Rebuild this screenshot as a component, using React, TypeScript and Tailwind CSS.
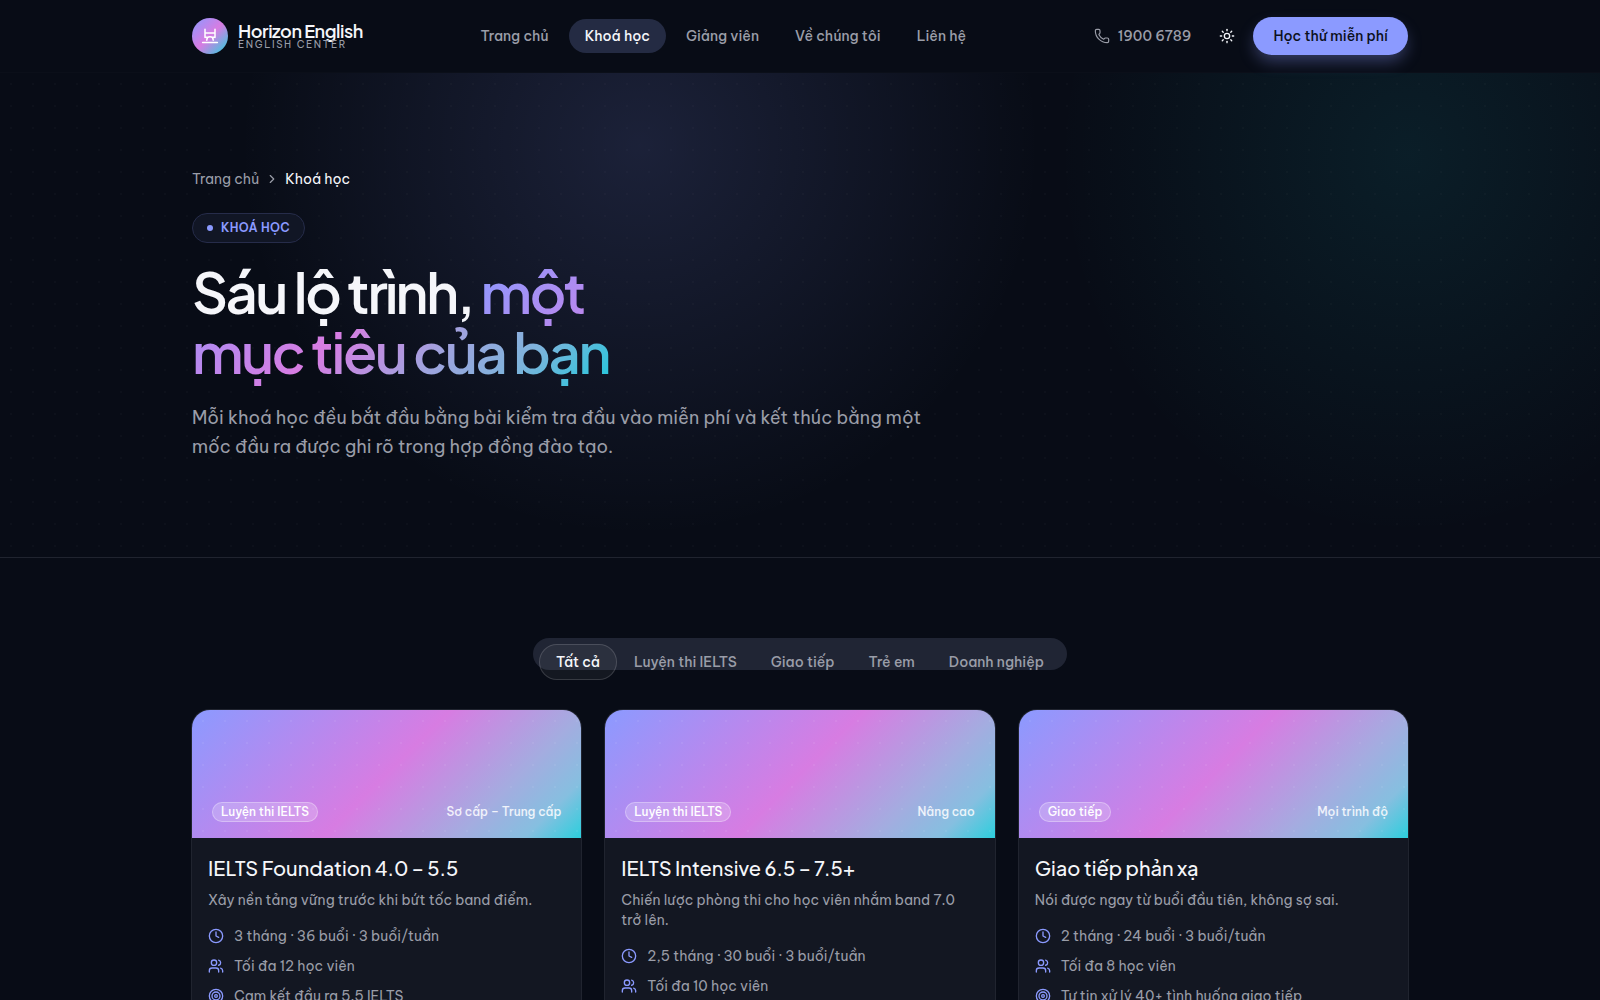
import type { ReactNode } from 'react'
import { ChevronRight, Clock, Phone, Sun, Target, Users } from 'lucide-react'
import { clsx } from 'clsx'

type Course = {
  title: string
  category: string
  level: string
  summary: string
  schedule: string
  size: string
  outcome: string
}

const NAV = [
  { label: 'Trang chủ', href: '#trang-chu' },
  { label: 'Khoá học', href: '#khoa-hoc', active: true },
  { label: 'Giảng viên', href: '#giang-vien' },
  { label: 'Về chúng tôi', href: '#ve-chung-toi' },
  { label: 'Liên hệ', href: '#lien-he' },
]

const FILTERS = ['Tất cả', 'Luyện thi IELTS', 'Giao tiếp', 'Trẻ em', 'Doanh nghiệp']

const COURSES: Course[] = [
  {
    title: 'IELTS Foundation 4.0 – 5.5',
    category: 'Luyện thi IELTS',
    level: 'Sơ cấp – Trung cấp',
    summary: 'Xây nền tảng vững trước khi bứt tốc band điểm.',
    schedule: '3 tháng · 36 buổi · 3 buổi/tuần',
    size: 'Tối đa 12 học viên',
    outcome: 'Cam kết đầu ra 5.5 IELTS',
  },
  {
    title: 'IELTS Intensive 6.5 – 7.5+',
    category: 'Luyện thi IELTS',
    level: 'Nâng cao',
    summary: 'Chiến lược phòng thi cho học viên nhắm band 7.0 trở lên.',
    schedule: '2,5 tháng · 30 buổi · 3 buổi/tuần',
    size: 'Tối đa 10 học viên',
    outcome: 'Cam kết đầu ra 7.0 IELTS',
  },
  {
    title: 'Giao tiếp phản xạ',
    category: 'Giao tiếp',
    level: 'Mọi trình độ',
    summary: 'Nói được ngay từ buổi đầu tiên, không sợ sai.',
    schedule: '2 tháng · 24 buổi · 3 buổi/tuần',
    size: 'Tối đa 8 học viên',
    outcome: 'Tự tin xử lý 40+ tình huống giao tiếp',
  },
]

function Container({ className, children }: { className?: string; children: ReactNode }) {
  return <div className={clsx('mx-auto w-full max-w-7xl px-8', className)}>{children}</div>
}

function Logo() {
  return (
    <a href="#trang-chu" className="flex items-center gap-2.5">
      <span className="flex size-9 items-center justify-center rounded-full bg-[linear-gradient(135deg,#8b9aff_0%,#d77ce2_50%,#22d3dd_100%)]">
        <svg viewBox="0 0 18 18" className="size-[18px]" fill="none" stroke="white" strokeWidth="1.5" strokeLinecap="round" aria-hidden>
          <path d="M4 2.2v8.3M14 2.2v8.3M4 6h10M5.8 13.2v-.3a3.2 3.2 0 0 1 6.4 0v.3M4 10.3h2.4M11.6 10.3H14M1.6 15.4h14.8" />
        </svg>
      </span>
      <span className="flex flex-col">
        <span className="font-['Plus_Jakarta_Sans','Inter',sans-serif] text-lg leading-[18px] font-semibold tracking-tight text-[#f5f6fa]">
          Horizon English
        </span>
        <span className="text-[10px] leading-[10px] tracking-[0.16em] text-[#9a9da8]">ENGLISH CENTER</span>
      </span>
    </a>
  )
}

function Header() {
  return (
    <header className="border-b border-[#0b0f19] bg-[#080c16]">
      <Container className="flex h-[72px] items-center justify-between">
        <Logo />
        <nav className="flex gap-1">
          {NAV.map((item) => (
            <a
              key={item.label}
              href={item.href}
              className={clsx(
                'rounded-full px-4 py-[7px] text-sm font-medium',
                item.active ? 'bg-[#242b43] text-[#f5f6fa]' : 'text-[#9a9da8]'
              )}
            >
              {item.label}
            </a>
          ))}
        </nav>
        <div className="flex items-center gap-2">
          <a href="tel:19006789" className="flex items-center gap-2 px-2.5 text-sm font-medium text-[#9a9da8]">
            <Phone className="size-4" strokeWidth={1.75} />
            1900 6789
          </a>
          <button type="button" aria-label="Đổi giao diện" className="flex size-9 items-center justify-center text-[#f5f6fa]">
            <Sun className="size-4" />
          </button>
          <button
            type="button"
            className="h-[38px] rounded-full bg-[#8b9aff] px-5 text-sm font-medium text-[#0b1020] shadow-[0_8px_16px_-2px_rgba(139,154,255,0.35)]"
          >
            Học thử miễn phí
          </button>
        </div>
      </Container>
    </header>
  )
}

function Hero() {
  return (
    <section className="border-b border-[#20242f] bg-[radial-gradient(circle_at_center,rgba(255,255,255,0.02)_1px,transparent_1px),radial-gradient(400px_390px_at_40%_15%,rgba(139,154,255,0.15),transparent),radial-gradient(350px_380px_at_88%_17%,rgba(34,211,221,0.09),transparent)] bg-[size:22px_22px,auto,auto]">
      <Container className="py-24">
        <nav aria-label="Breadcrumb" className="flex items-center gap-1.5 text-sm leading-5 text-[#9a9da8]">
          <a href="#trang-chu">Trang chủ</a>
          <ChevronRight className="size-3.5" />
          <span aria-current="page" className="text-[#f5f6fa]">Khoá học</span>
        </nav>
        <p className="mt-6 inline-flex h-[30px] items-center gap-2 rounded-full border border-[#262c4a] bg-[#111625] px-3.5 text-xs font-semibold tracking-wide text-[#8b9aff]">
          <span className="size-1.5 rounded-full bg-[#8b9aff]" />
          KHOÁ HỌC
        </p>
        <h1 className="mt-[18px] max-w-md font-['Plus_Jakarta_Sans','Inter',sans-serif] text-[56px] leading-[60px] font-semibold tracking-[-0.04em] text-[#f5f6fa]">
          Sáu lộ trình,{' '}
          <span className="bg-[linear-gradient(135deg,#8b9aff_0%,#d77ce2_45%,#a2a2de_65%,#7cb4dc_82%,#22c8dc_100%)] bg-clip-text text-transparent">
            một mục tiêu của bạn
          </span>
        </h1>
        <p className="mt-[22px] max-w-3xl text-lg leading-[29px] text-[#9a9da8]">
          Mỗi khoá học đều bắt đầu bằng bài kiểm tra đầu vào miễn phí và kết thúc bằng một mốc đầu ra được ghi rõ trong hợp đồng đào tạo.
        </p>
      </Container>
    </section>
  )
}

function Filters() {
  return (
    <div role="tablist" aria-label="Lọc khoá học" className="mx-auto flex h-8 w-fit items-start rounded-full bg-[#202534] px-1.5 pt-1.5">
      {FILTERS.map((label, i) => (
        <button
          key={label}
          type="button"
          role="tab"
          aria-selected={i === 0}
          className={clsx(
            'h-9 shrink-0 rounded-full border px-4 text-sm font-medium',
            i === 0 ? 'border-white/15 bg-white/5 text-[#f5f6fa]' : 'border-transparent text-[#9a9da8]'
          )}
        >
          {label}
        </button>
      ))}
    </div>
  )
}

function CourseCard({ course }: { course: Course }) {
  const facts = [
    { Icon: Clock, text: course.schedule },
    { Icon: Users, text: course.size },
    { Icon: Target, text: course.outcome },
  ]
  return (
    <article className="overflow-hidden rounded-[18px] bg-[#131722] ring-1 ring-[#20242f]">
      <div className="flex h-32 items-end justify-between bg-[radial-gradient(circle_at_center,rgba(255,255,255,0.06)_1px,transparent_1px),linear-gradient(135deg,#8b9aff_0%,#d77ce2_50%,#a4ace0_76%,#86bfe0_89%,#2ccfdd_100%)] bg-[size:22px_22px,auto] px-5 pb-4 text-xs font-medium">
        <span className="flex h-5 items-center rounded-full border border-white/30 bg-white/20 px-2 text-white">
          {course.category}
        </span>
        <span className="leading-5 text-white/85">{course.level}</span>
      </div>
      <div className="p-4">
        <h2 className="font-['Plus_Jakarta_Sans','Inter',sans-serif] text-xl leading-7 font-medium text-[#f5f6fa]">{course.title}</h2>
        <p className="mt-2 text-sm leading-5 text-pretty text-[#9a9da8]">{course.summary}</p>
        <ul className="mt-4 flex flex-col gap-2.5 text-sm leading-5 text-[#9a9da8]">
          {facts.map(({ Icon, text }) => (
            <li key={text} className="flex items-center gap-2.5">
              <Icon className="size-4 text-[#8b9aff]" />
              {text}
            </li>
          ))}
        </ul>
      </div>
    </article>
  )
}

export default function App() {
  return (
    <div className="min-h-screen bg-[#080c16] font-['Be_Vietnam_Pro','Inter',sans-serif]">
      <Header />
      <main>
        <Hero />
        <Container className="py-20">
          <Filters />
          <div className="mt-10 grid grid-cols-3 gap-6">
            {COURSES.map((course) => (
              <CourseCard key={course.title} course={course} />
            ))}
          </div>
        </Container>
      </main>
    </div>
  )
}
